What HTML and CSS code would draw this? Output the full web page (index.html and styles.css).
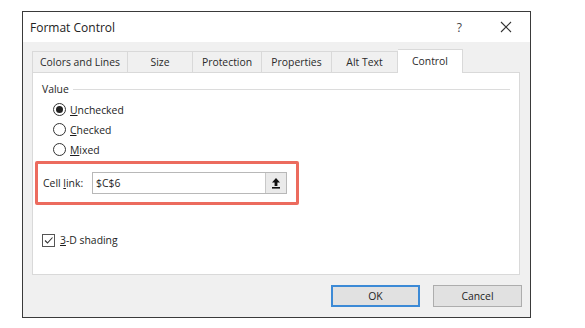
FILE: index.html
```html
<!DOCTYPE html>
<html>
<head>
<meta charset="utf-8">
<link rel="stylesheet" href="styles.css">
</head>
<body>
<div class="dialog">
  <div class="titlebar">
    <span class="title">Format Control</span>
    <span class="help">?</span>
    <span class="close"><svg width="12" height="12" viewBox="0 0 12 12"><path d="M1 1L11 11M11 1L1 11" stroke="#333" stroke-width="1.1" fill="none"/></svg></span>
  </div>
  <div class="content">
    <div class="tabs">
      <div class="tab t1">Colors and Lines</div>
      <div class="tab t2">Size</div>
      <div class="tab t3">Protection</div>
      <div class="tab t4">Properties</div>
      <div class="tab t5">Alt Text</div>
      <div class="tab active t6">Control</div>
    </div>
    <div class="panel">
      <div class="group-label"><span>Value</span><div class="rule"></div></div>
      <div class="radios">
        <div class="radio-row"><span class="radio on"></span><span><u>U</u>nchecked</span></div>
        <div class="radio-row"><span class="radio"></span><span><u>C</u>hecked</span></div>
        <div class="radio-row"><span class="radio"></span><span><u>M</u>ixed</span></div>
      </div>
      <div class="highlight">
        <span class="link-label">Cell <u>l</u>ink:</span>
        <div class="input">
          <span class="input-text">$C$6</span>
          <span class="ref-btn"><svg width="10" height="12" viewBox="0 0 10 12"><path d="M5 1L1 5.5H3.6V9H6.4V5.5H9Z" fill="#111"/><rect x="1" y="10" width="8" height="1.6" fill="#111"/></svg></span>
        </div>
      </div>
      <div class="check-row">
        <span class="checkbox"><svg width="11" height="11" viewBox="0 0 11 11"><path d="M2 5.5L4.5 8L9.5 2.5" stroke="#333" stroke-width="1.1" fill="none"/></svg></span>
        <span><u>3</u>-D shading</span>
      </div>
    </div>
    <div class="footer">
      <button class="btn ok">OK</button>
      <button class="btn">Cancel</button>
    </div>
  </div>
</div>
</body>
</html>
```
FILE: styles.css
```css
* { box-sizing: border-box; }
body {
  margin: 0;
  background: #ffffff;
  font-family: "Open Sans", "Noto Sans", sans-serif;
  color: #1e1e1e;
  font-size: 10.4px;
}
.dialog {
  margin: 11px 0 0 22px;
  width: 509px;
  height: 307px;
  border: 1px solid #3a3a3a;
  background: #f0f0f0;
  display: flex;
  flex-direction: column;
}
.titlebar {
  height: 30px;
  background: #ffffff;
  display: flex;
  align-items: center;
  padding-left: 7px;
}
.title {
  font-size: 12px;
  flex: 1;
  color: #222;
}
.help {
  font-size: 12px;
  color: #444;
  margin-right: 38px;
}
.close {
  display: flex;
  margin-right: 18px;
}
.content {
  flex: 1;
  padding: 6px 10px 0 9px;
  display: flex;
  flex-direction: column;
}
.tabs {
  display: flex;
  align-items: flex-end;
  height: 24px;
}
.tab {
  height: 21px;
  border: 1px solid #d9d9d9;
  border-bottom: none;
  border-left: none;
  display: flex;
  align-items: center;
  justify-content: center;
  color: #2a2a2a;
  background: #f0f0f0;
}
.t1 { width: 96px; border-left: 1px solid #d9d9d9; }
.t2 { width: 65px; }
.t3 { width: 69px; }
.t4 { width: 70px; }
.t5 { width: 66px; }
.t6 { width: 65px; }
.tab.active {
  height: 24px;
  background: #ffffff;
  margin-bottom: -1px;
  position: relative;
  padding-bottom: 2px;
}
.panel {
  height: 203px;
  width: 488px;
  background: #ffffff;
  border: 1px solid #d9d9d9;
  padding: 9px 9px 0 9px;
}
.group-label {
  display: flex;
  align-items: center;
  gap: 4px;
}
.rule {
  flex: 1;
  height: 1px;
  background: #dcdcdc;
  margin-top: 1px;
}
.radios {
  padding: 6px 0 0 11px;
  display: flex;
  flex-direction: column;
  gap: 5px;
}
.radio-row {
  display: flex;
  align-items: center;
  gap: 4px;
  height: 15px;
}
.radio {
  width: 13px;
  height: 13px;
  border-radius: 50%;
  border: 1px solid #333;
  background: #fff;
  display: flex;
  align-items: center;
  justify-content: center;
}
.radio.on::after {
  content: "";
  width: 7px;
  height: 7px;
  border-radius: 50%;
  background: #222;
}
.highlight {
  margin: 4px 0 0 -7px;
  width: 264px;
  height: 44px;
  border: 3px solid #ec6b5e;
  border-radius: 2px;
  display: flex;
  align-items: center;
  padding-left: 5px;
}
.link-label { width: 49px; }
.input {
  width: 195px;
  height: 22px;
  border: 1px solid #b8b8b8;
  display: flex;
  align-items: center;
}
.input-text { flex: 1; padding-left: 3px; }
.ref-btn {
  width: 21px;
  height: 20px;
  border-left: 1px solid #c8c8c8;
  background: #eaeaea;
  display: flex;
  align-items: center;
  justify-content: center;
}
.check-row {
  margin-top: 28px;
  display: flex;
  align-items: center;
  gap: 5px;
  padding-left: 0;
}
.checkbox {
  width: 13px;
  height: 13px;
  border: 1px solid #555;
  background: #fff;
  display: flex;
  align-items: center;
  justify-content: center;
}
.footer {
  display: flex;
  justify-content: flex-end;
  gap: 13px;
  padding-top: 10px;
  margin-right: -2px;
}
.btn {
  width: 89px;
  height: 22px;
  font-family: "Open Sans", "Noto Sans", sans-serif;
  font-size: 10.4px;
  color: #1e1e1e;
  background: #e1e1e1;
  border: 1px solid #adadad;
  padding: 0;
}
.btn.ok {
  border: 2px solid #3c8ad6;
}
```
